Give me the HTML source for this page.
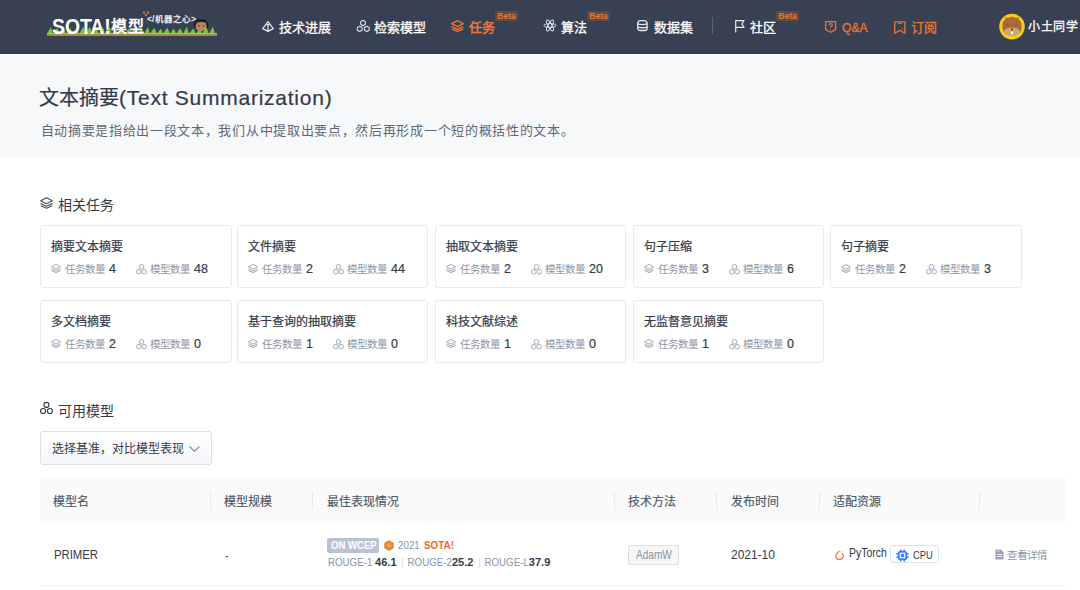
<!DOCTYPE html>
<html lang="zh-CN"><head><meta charset="utf-8">
<style>
*{margin:0;padding:0;box-sizing:border-box}
html,body{width:1080px;height:590px;overflow:hidden;background:#fff;font-family:"Liberation Sans",sans-serif;color:#333}
.a{position:absolute;white-space:nowrap}
svg.a{overflow:visible}
.sx{transform-origin:0 50%}
#hdr{position:absolute;left:0;top:0;width:1080px;height:54px;background:#384153;border-bottom:1px solid #2f3746}
.nav{position:absolute;top:18px;height:20px;line-height:20px;font-size:13px;font-weight:500;-webkit-text-stroke:0.3px currentColor;color:#fff;white-space:nowrap}
.nav.o{color:#ec7631}
.beta{position:absolute;top:11px;width:23px;height:10px;line-height:10px;font-size:8.5px;color:#ec7631;background:#5d4a45;text-align:center;border-radius:1px;font-weight:700}
#hero{position:absolute;left:0;top:55px;width:1080px;height:102px;background:#f7f8fa}
.h1{position:absolute;left:39px;top:84px;line-height:28px;font-size:20px;-webkit-text-stroke:0.2px #333b4a;color:#333b4a;white-space:nowrap}
.sub{position:absolute;left:40.5px;top:120px;font-size:13px;letter-spacing:0.69px;color:#5f6878;white-space:nowrap}
.sec{position:absolute;font-size:14px;margin-top:-0.5px;color:#333b4a;white-space:nowrap}
.card{position:absolute;width:191px;height:63px;border:1px solid #e8eaef;border-radius:3px;background:#fff}
.card .t{position:absolute;left:10px;top:11px;font-size:12px;font-weight:400;-webkit-text-stroke:0.22px currentColor;color:#333b4a;white-space:nowrap}
.card .s{position:absolute;top:35px;font-size:10.5px;color:#8e96a7;white-space:nowrap;height:16px;line-height:16px}
.card .s b{font-weight:400;color:#333b4a;font-size:12.5px;margin-left:4px;-webkit-text-stroke:0.2px currentColor}
.th{position:absolute;top:492px;font-size:12px;color:#4b5565;white-space:nowrap;-webkit-text-stroke:0.15px currentColor}
.dv{position:absolute;top:491px;width:1px;height:19px;background:#e8e9ec}
</style></head><body>
<div id="hdr"></div>
<!-- logo -->
<svg class="a" style="left:0;top:0" width="230" height="54" viewBox="0 0 230 54">
<path d="M47 34.2 Q48.5 31 50.8 27.1 Q52.0 30 53.0 34.2 Q54.5 31 57.3 27.9 Q58.5 30 60.0 34.2 Q61.5 31 63.8 27.4 Q65.0 30 66.0 34.2 Q67.5 31 70.3 28.0 Q71.5 30 73.0 34.2 Q74.5 31 76.8 28.1 Q78.0 30 79.0 34.2 Q80.5 31 83.3 26.7 Q84.5 30 86.0 34.2 Q87.5 31 89.8 26.5 Q91.0 30 92.0 34.2 Q93.5 31 96.3 28.6 Q97.5 30 99.0 34.2 Q100.5 31 102.8 27.1 Q104.0 30 105.0 34.2 Q106.5 31 109.3 27.1 Q110.5 30 112.0 34.2 Q113.5 31 115.8 29.0 Q117.0 30 118.0 34.2 Q119.5 31 122.3 27.7 Q123.5 30 125.0 34.2 Q126.5 31 128.8 28.6 Q130.0 30 131.0 34.2 Q132.5 31 135.3 27.7 Q136.5 30 138.0 34.2 Q139.5 31 141.8 28.1 Q143.0 30 144.0 34.2 Q145.5 31 147.8 26.9 Q149.0 30 150.0 34.2 Q151.5 31 154.3 28.1 Q155.5 30 157.0 34.2 Q158.5 31 160.8 28.7 Q162.0 30 163.0 34.2 Q164.5 31 167.3 27.8 Q168.5 30 170.0 34.2 Q171.5 31 173.8 28.4 Q175.0 30 176.0 34.2 Q177.5 31 180.3 28.2 Q181.5 30 183.0 34.2 Q184.5 31 186.8 26.7 Q188.0 30 189.0 34.2 Q190.5 31 193.3 28.4 Q194.5 30 196.0 34.2 Q197.5 31 199.8 28.0 Q201.0 30 202.0 34.2 Q203.5 31 206.3 27.3 Q207.5 30 209.0 34.2 Q210.5 31 212.8 26.6 Q214.0 30 215.0 34.2 Z" fill="#72c640"/>
<rect x="47" y="33" width="170" height="1.4" fill="#8fd54e"/>
<rect x="47" y="34.3" width="170" height="1.6" fill="#d0873a"/>
<g fill="#e8762c"><rect x="143" y="11.5" width="2" height="2"/><rect x="147" y="11.5" width="2" height="2"/><rect x="145" y="13.8" width="2" height="2"/></g>
<g transform="translate(193.5 19)"><path d="M0.5 6Q0 1.5 4 0.5L5 0L6 0.8L8.5 0L10 0.8L12.5 0.2L12 1.5Q15 3 14.8 6.5L14.5 9L0.8 9Z" fill="#1d1d22"/><ellipse cx="7.6" cy="7.6" rx="5.6" ry="4.6" fill="#b88662"/><rect x="3" y="3.6" width="9.5" height="1.4" fill="#8a8f99"/><rect x="4.5" y="6.2" width="1.6" height="1.3" fill="#7a2238"/><rect x="9.2" y="6.2" width="1.6" height="1.3" fill="#7a2238"/></g>
</svg>
<div class="a" style="left:52px;top:13px;font-size:22px;font-weight:700;color:#fff;line-height:28px"><span style="display:inline-block;transform:scaleX(0.88);transform-origin:0 50%">SOTA!</span></div>
<div class="a" style="left:111px;top:16.5px;font-size:16px;font-weight:700;color:#fff;line-height:20px;letter-spacing:1px">模型</div>
<div class="a" style="left:147px;top:13px;font-size:8.5px;font-weight:700;color:#f0f0f0;line-height:12px;letter-spacing:0.1px">&lt;/机器之心&gt;</div>




<!-- nav -->
<svg class="a" style="left:262px;top:21px" width="12" height="11" viewBox="0 0 12 11"><path d="M6 0.7L0.7 7.6L6 10.4L11.3 7.6Z M6 3.5V10.2 M4.6 3.6H7.4" fill="none" stroke="#e8e9ec" stroke-width="1.2" stroke-linejoin="round"/></svg>
<div class="nav" style="left:279px">技术进展</div>
<svg class="a" style="left:356px;top:19px" width="15" height="14" viewBox="0 0 15 14"><path d="M7.00 6.70 L4.66 5.35 L4.66 2.65 L7.00 1.30 L9.34 2.65 L9.34 5.35ZM3.70 12.55 L1.36 11.20 L1.36 8.50 L3.70 7.15 L6.04 8.50 L6.04 11.20ZM10.85 12.55 L8.51 11.20 L8.51 8.50 L10.85 7.15 L13.19 8.50 L13.19 11.20Z" fill="none" stroke="#dcdfe5" stroke-width="1.15" stroke-linejoin="round"/></svg>
<div class="nav" style="left:374px">检索模型</div>
<svg class="a" style="left:451px;top:20px" width="13" height="12" viewBox="0 0 13 12"><g fill="none" stroke="#ec7631" stroke-width="1.3" stroke-linejoin="round"><path d="M6.5 0.7L12.3 3.7L6.5 6.7L0.7 3.7Z"/><path d="M0.7 6.6L6.5 9.3L12.3 6.6"/><path d="M0.7 8.8L6.5 11.3L12.3 8.8"/></g></svg>
<div class="nav o" style="left:469px;-webkit-text-stroke:0.55px #ec7631">任务</div>
<div class="beta" style="left:495px">Beta</div>
<svg class="a" style="left:543px;top:19px" width="14" height="13" viewBox="0 0 14 13"><g fill="none" stroke="#dcdfe5" stroke-width="1"><ellipse cx="7" cy="6.5" rx="6.1" ry="1.9"/><ellipse cx="7" cy="6.5" rx="6.1" ry="1.9" transform="rotate(60 7 6.5)"/><ellipse cx="7" cy="6.5" rx="6.1" ry="1.9" transform="rotate(120 7 6.5)"/></g></svg>
<div class="nav" style="left:561px">算法</div>
<div class="beta" style="left:587px">Beta</div>
<svg class="a" style="left:637px;top:20px" width="11" height="11" viewBox="0 0 11 11"><g fill="none" stroke="#e8e9ec" stroke-width="1.3"><rect x="0.7" y="0.7" width="9.4" height="9.8" rx="2.6"/><path d="M0.8 3.9Q5.4 5.2 10 3.9 M0.8 7.1Q5.4 8.4 10 7.1"/></g></svg>
<div class="nav" style="left:654px">数据集</div>
<div class="a" style="left:712px;top:17px;width:1px;height:17px;background:#5b6372"></div>
<svg class="a" style="left:735px;top:20px" width="10" height="13" viewBox="0 0 10 13"><path d="M0.7 12.6V0.7H9L6.8 4L9 7.3H0.7" fill="none" stroke="#e8e9ec" stroke-width="1.2" stroke-linejoin="round"/></svg>
<div class="nav" style="left:750px">社区</div>
<div class="beta" style="left:776px">Beta</div>
<svg class="a" style="left:825px;top:21px" width="12" height="12" viewBox="0 0 12 12"><path d="M0.7 0.7H10.6V8.6L5.65 11.3L0.7 8.6Z" fill="none" stroke="#ec7631" stroke-width="1.3" stroke-linejoin="round"/><path d="M4 4.2Q4.2 2.6 5.8 2.6Q7.5 2.7 7.4 4.1Q7.3 5.1 5.8 5.6V6.6" fill="none" stroke="#ec7631" stroke-width="1.1"/><circle cx="5.8" cy="8" r="0.6" fill="#ec7631"/></svg>
<div class="nav o" style="left:842px"><span style="display:inline-block;transform:scaleX(0.93);transform-origin:0 50%">Q&amp;A</span></div>
<svg class="a" style="left:894px;top:21px" width="12" height="13" viewBox="0 0 12 13"><path d="M0.7 0.9H10.9V12.2L5.8 9.4L0.7 12.2Z" fill="none" stroke="#ec7631" stroke-width="1.3" stroke-linejoin="round"/><path d="M4.2 2.4H7.4" stroke="#ec7631" stroke-width="1.2"/><path d="M8.3 6.3L9 7.4L8.3 8.5L7.6 7.4Z" fill="#ec7631"/></svg>
<div class="nav o" style="left:911px">订阅</div>
<svg class="a" style="left:999px;top:13px" width="26" height="27" viewBox="0 0 26 27"><circle cx="13" cy="13.6" r="12.8" fill="#f4cf12"/><path d="M3.4 15Q3 8 7 5.8L5.6 3.9L9.2 4.9Q13 2.6 16.8 4.9L20.4 3.9L19 5.8Q23 8 22.6 15Q22 22.4 13 22.6Q4 22.4 3.4 15Z" fill="#a86b3e"/><ellipse cx="13" cy="18.8" rx="8.3" ry="4" fill="#d6a574"/><path d="M7.3 12.6Q8.6 11.2 9.9 12.6M16.1 12.6Q17.4 11.2 18.7 12.6" fill="none" stroke="#7d4a26" stroke-width="0.7"/><ellipse cx="13" cy="16.6" rx="0.9" ry="1.1" fill="#5a1d12"/><rect x="12" y="18.6" width="2" height="2.6" rx="0.4" fill="#fff"/></svg>
<div class="a" style="left:1028px;top:18px;font-size:12px;letter-spacing:0.5px;font-weight:400;-webkit-text-stroke:0.3px #fff;color:#fff;line-height:18px">小土同学</div>

<div id="hero"></div>
<div class="h1">文本摘要<span style="font-size:21px;letter-spacing:0.75px">(Text Summarization)</span></div>
<div class="sub">自动摘要是指给出一段文本，我们从中提取出要点，然后再形成一个短的概括性的文本。</div>

<svg class="a" style="left:40px;top:197px" width="13" height="12" viewBox="0 0 13 12"><g fill="none" stroke="#4a5363" stroke-width="1.2" stroke-linejoin="round"><path d="M6.5 0.7L12.3 3.7L6.5 6.7L0.7 3.7Z"/><path d="M0.7 6.6L6.5 9.3L12.3 6.6"/><path d="M0.7 8.8L6.5 11.3L12.3 8.8"/></g></svg>
<div class="sec" style="left:58px;top:194px">相关任务</div>

<div class="card" style="width:192px;left:40px;top:225px"><div class="t">摘要文本摘要</div><svg class="a" style="left:10px;top:38px" width="10" height="9" viewBox="0 0 10 9"><g fill="none" stroke="#a3abbb" stroke-width="1" stroke-linejoin="round"><path d="M5 0.5L9.5 2.8L5 5.1L0.5 2.8Z"/><path d="M0.5 4.9L5 7L9.5 4.9"/><path d="M0.5 6.6L5 8.6L9.5 6.6"/></g></svg><div class="s" style="left:24px">任务数量<b>4</b></div><svg class="a" style="left:95px;top:38px" width="11" height="11" viewBox="0 0 11 11"><g fill="none" stroke="#a3abbb" stroke-width="1"><circle cx="5.5" cy="2.8" r="2.3"/><circle cx="2.8" cy="7.7" r="2.3"/><circle cx="8.2" cy="7.7" r="2.3"/></g></svg><div class="s" style="left:109px">模型数量<b>48</b></div></div>
<div class="card" style="left:237px;top:225px"><div class="t">文件摘要</div><svg class="a" style="left:10px;top:38px" width="10" height="9" viewBox="0 0 10 9"><g fill="none" stroke="#a3abbb" stroke-width="1" stroke-linejoin="round"><path d="M5 0.5L9.5 2.8L5 5.1L0.5 2.8Z"/><path d="M0.5 4.9L5 7L9.5 4.9"/><path d="M0.5 6.6L5 8.6L9.5 6.6"/></g></svg><div class="s" style="left:24px">任务数量<b>2</b></div><svg class="a" style="left:95px;top:38px" width="11" height="11" viewBox="0 0 11 11"><g fill="none" stroke="#a3abbb" stroke-width="1"><circle cx="5.5" cy="2.8" r="2.3"/><circle cx="2.8" cy="7.7" r="2.3"/><circle cx="8.2" cy="7.7" r="2.3"/></g></svg><div class="s" style="left:109px">模型数量<b>44</b></div></div>
<div class="card" style="left:435px;top:225px"><div class="t">抽取文本摘要</div><svg class="a" style="left:10px;top:38px" width="10" height="9" viewBox="0 0 10 9"><g fill="none" stroke="#a3abbb" stroke-width="1" stroke-linejoin="round"><path d="M5 0.5L9.5 2.8L5 5.1L0.5 2.8Z"/><path d="M0.5 4.9L5 7L9.5 4.9"/><path d="M0.5 6.6L5 8.6L9.5 6.6"/></g></svg><div class="s" style="left:24px">任务数量<b>2</b></div><svg class="a" style="left:95px;top:38px" width="11" height="11" viewBox="0 0 11 11"><g fill="none" stroke="#a3abbb" stroke-width="1"><circle cx="5.5" cy="2.8" r="2.3"/><circle cx="2.8" cy="7.7" r="2.3"/><circle cx="8.2" cy="7.7" r="2.3"/></g></svg><div class="s" style="left:109px">模型数量<b>20</b></div></div>
<div class="card" style="left:633px;top:225px"><div class="t">句子压缩</div><svg class="a" style="left:10px;top:38px" width="10" height="9" viewBox="0 0 10 9"><g fill="none" stroke="#a3abbb" stroke-width="1" stroke-linejoin="round"><path d="M5 0.5L9.5 2.8L5 5.1L0.5 2.8Z"/><path d="M0.5 4.9L5 7L9.5 4.9"/><path d="M0.5 6.6L5 8.6L9.5 6.6"/></g></svg><div class="s" style="left:24px">任务数量<b>3</b></div><svg class="a" style="left:95px;top:38px" width="11" height="11" viewBox="0 0 11 11"><g fill="none" stroke="#a3abbb" stroke-width="1"><circle cx="5.5" cy="2.8" r="2.3"/><circle cx="2.8" cy="7.7" r="2.3"/><circle cx="8.2" cy="7.7" r="2.3"/></g></svg><div class="s" style="left:109px">模型数量<b>6</b></div></div>
<div class="card" style="width:192px;left:830px;top:225px"><div class="t">句子摘要</div><svg class="a" style="left:10px;top:38px" width="10" height="9" viewBox="0 0 10 9"><g fill="none" stroke="#a3abbb" stroke-width="1" stroke-linejoin="round"><path d="M5 0.5L9.5 2.8L5 5.1L0.5 2.8Z"/><path d="M0.5 4.9L5 7L9.5 4.9"/><path d="M0.5 6.6L5 8.6L9.5 6.6"/></g></svg><div class="s" style="left:24px">任务数量<b>2</b></div><svg class="a" style="left:95px;top:38px" width="11" height="11" viewBox="0 0 11 11"><g fill="none" stroke="#a3abbb" stroke-width="1"><circle cx="5.5" cy="2.8" r="2.3"/><circle cx="2.8" cy="7.7" r="2.3"/><circle cx="8.2" cy="7.7" r="2.3"/></g></svg><div class="s" style="left:109px">模型数量<b>3</b></div></div>
<div class="card" style="width:192px;left:40px;top:300px"><div class="t">多文档摘要</div><svg class="a" style="left:10px;top:38px" width="10" height="9" viewBox="0 0 10 9"><g fill="none" stroke="#a3abbb" stroke-width="1" stroke-linejoin="round"><path d="M5 0.5L9.5 2.8L5 5.1L0.5 2.8Z"/><path d="M0.5 4.9L5 7L9.5 4.9"/><path d="M0.5 6.6L5 8.6L9.5 6.6"/></g></svg><div class="s" style="left:24px">任务数量<b>2</b></div><svg class="a" style="left:95px;top:38px" width="11" height="11" viewBox="0 0 11 11"><g fill="none" stroke="#a3abbb" stroke-width="1"><circle cx="5.5" cy="2.8" r="2.3"/><circle cx="2.8" cy="7.7" r="2.3"/><circle cx="8.2" cy="7.7" r="2.3"/></g></svg><div class="s" style="left:109px">模型数量<b>0</b></div></div>
<div class="card" style="left:237px;top:300px"><div class="t">基于查询的抽取摘要</div><svg class="a" style="left:10px;top:38px" width="10" height="9" viewBox="0 0 10 9"><g fill="none" stroke="#a3abbb" stroke-width="1" stroke-linejoin="round"><path d="M5 0.5L9.5 2.8L5 5.1L0.5 2.8Z"/><path d="M0.5 4.9L5 7L9.5 4.9"/><path d="M0.5 6.6L5 8.6L9.5 6.6"/></g></svg><div class="s" style="left:24px">任务数量<b>1</b></div><svg class="a" style="left:95px;top:38px" width="11" height="11" viewBox="0 0 11 11"><g fill="none" stroke="#a3abbb" stroke-width="1"><circle cx="5.5" cy="2.8" r="2.3"/><circle cx="2.8" cy="7.7" r="2.3"/><circle cx="8.2" cy="7.7" r="2.3"/></g></svg><div class="s" style="left:109px">模型数量<b>0</b></div></div>
<div class="card" style="left:435px;top:300px"><div class="t">科技文献综述</div><svg class="a" style="left:10px;top:38px" width="10" height="9" viewBox="0 0 10 9"><g fill="none" stroke="#a3abbb" stroke-width="1" stroke-linejoin="round"><path d="M5 0.5L9.5 2.8L5 5.1L0.5 2.8Z"/><path d="M0.5 4.9L5 7L9.5 4.9"/><path d="M0.5 6.6L5 8.6L9.5 6.6"/></g></svg><div class="s" style="left:24px">任务数量<b>1</b></div><svg class="a" style="left:95px;top:38px" width="11" height="11" viewBox="0 0 11 11"><g fill="none" stroke="#a3abbb" stroke-width="1"><circle cx="5.5" cy="2.8" r="2.3"/><circle cx="2.8" cy="7.7" r="2.3"/><circle cx="8.2" cy="7.7" r="2.3"/></g></svg><div class="s" style="left:109px">模型数量<b>0</b></div></div>
<div class="card" style="left:633px;top:300px"><div class="t">无监督意见摘要</div><svg class="a" style="left:10px;top:38px" width="10" height="9" viewBox="0 0 10 9"><g fill="none" stroke="#a3abbb" stroke-width="1" stroke-linejoin="round"><path d="M5 0.5L9.5 2.8L5 5.1L0.5 2.8Z"/><path d="M0.5 4.9L5 7L9.5 4.9"/><path d="M0.5 6.6L5 8.6L9.5 6.6"/></g></svg><div class="s" style="left:24px">任务数量<b>1</b></div><svg class="a" style="left:95px;top:38px" width="11" height="11" viewBox="0 0 11 11"><g fill="none" stroke="#a3abbb" stroke-width="1"><circle cx="5.5" cy="2.8" r="2.3"/><circle cx="2.8" cy="7.7" r="2.3"/><circle cx="8.2" cy="7.7" r="2.3"/></g></svg><div class="s" style="left:109px">模型数量<b>0</b></div></div>

<svg class="a" style="left:40px;top:402px" width="13" height="12" viewBox="0 0 13 12"><g fill="none" stroke="#333b4a" stroke-width="1.15"><circle cx="6.5" cy="2.9" r="2.5"/><circle cx="3.1" cy="9" r="2.5"/><circle cx="9.9" cy="9" r="2.5"/></g></svg>
<div class="sec" style="left:58px;top:400px">可用模型</div>

<div class="a" style="left:40px;top:431px;width:172px;height:34px;border:1px solid #dcdfe6;border-radius:3px;background:linear-gradient(#fff,#f4f5f8)"></div>
<div class="a" style="left:52px;top:439px;font-size:12px;color:#333b4a">选择基准，对比模型表现</div>
<svg class="a" style="left:189px;top:446px" width="11" height="6" viewBox="0 0 11 6"><path d="M0.6 0.6L5.5 5.2L10.4 0.6" fill="none" stroke="#7a8294" stroke-width="1.15"/></svg>

<div class="a" style="left:40px;top:478px;width:1026px;height:46px;background:#fafafa"></div>
<div class="a" style="left:40px;top:585px;width:1026px;height:1px;background:#eef0f3"></div>
<div class="th" style="left:53px">模型名</div>
<div class="dv" style="left:210px"></div>
<div class="th" style="left:224px">模型规模</div>
<div class="dv" style="left:312px"></div>
<div class="th" style="left:327px">最佳表现情况</div>
<div class="dv" style="left:614px"></div>
<div class="th" style="left:628px">技术方法</div>
<div class="dv" style="left:716px"></div>
<div class="th" style="left:731px">发布时间</div>
<div class="dv" style="left:819px"></div>
<div class="th" style="left:833px">适配资源</div>
<div class="dv" style="left:979px"></div>


<div class="a sx" style="left:53.5px;top:547px;font-size:13px;color:#333b4a;line-height:16px;transform:scaleX(0.87)">PRIMER</div>
<div class="a" style="left:224.5px;top:548.5px;font-size:12.5px;color:#5f6878">-</div>
<div class="a" style="left:327px;top:538px;width:52px;height:15px;background:#b8c3d4;border-radius:2px"></div>
<div class="a sx" style="left:331px;top:539px;font-size:10.3px;font-weight:700;color:#fff;line-height:13px;transform:scaleX(0.93)">ON WCEP</div>
<svg class="a" style="left:384px;top:540px" width="10" height="11" viewBox="0 0 10 11"><path d="M5 0.6L9.2 3V8L5 10.4L0.8 8V3Z" fill="#e8883a" stroke="#e8883a" stroke-width="1" stroke-linejoin="round"/><circle cx="5" cy="5.5" r="2" fill="#f0a860"/></svg>
<div class="a sx" style="left:398px;top:539px;font-size:10.3px;color:#8b93a4;line-height:13px;transform:scaleX(0.95)">2021</div>
<div class="a sx" style="left:424px;top:538.5px;font-size:11px;font-weight:700;color:#ec6a2c;line-height:13px;transform:scaleX(0.9)">SOTA!</div>
<div class="a sx" style="left:327.5px;top:555px;font-size:10.3px;color:#8b93a4;line-height:13px;transform:scaleX(0.945)">ROUGE-1 <b style="color:#333b4a;font-size:11.7px">46.1</b><span style="color:#d5d9e0;margin:0 4px 0 5px">|</span>ROUGE-2<b style="color:#333b4a;font-size:11.7px">25.2</b><span style="color:#d5d9e0;margin:0 4px 0 5px">|</span>ROUGE-L<b style="color:#333b4a;font-size:11.7px">37.9</b></div>
<div class="a" style="left:628px;top:545px;width:51px;height:20px;border:1px solid #dcdfe6;border-radius:2px;background:#f5f6f8"></div>
<div class="a sx" style="left:635.5px;top:547.5px;font-size:12px;color:#8b93a4;line-height:14px;transform:scaleX(0.84)">AdamW</div>
<div class="a sx" style="left:731px;top:547px;font-size:13px;color:#333b4a;line-height:16px;transform:scaleX(0.92)">2021-10</div>
<svg class="a" style="left:835px;top:550px" width="9" height="10" viewBox="0 0 9 10"><path d="M4.5 0.8L2 3.3Q0.8 4.6 0.8 6Q0.8 9.3 4.5 9.3Q8.2 9.3 8.2 6Q8.2 4.3 6.8 3.1" fill="none" stroke="#ee6b4d" stroke-width="1.2"/><circle cx="6.3" cy="1.9" r="0.6" fill="#ee6b4d"/></svg>
<div class="a sx" style="left:849px;top:546px;font-size:12px;color:#333b4a;line-height:14px;transform:scaleX(0.87)">PyTorch</div>
<div class="a" style="left:890px;top:545px;width:49px;height:18px;border:1px solid #dde1ea;border-radius:3px;background:#fff"></div>
<svg class="a" style="left:896px;top:549px" width="13" height="13" viewBox="0 0 13 13"><g fill="#3d7ff0"><rect x="2" y="2" width="9" height="9" rx="1.5"/><rect x="4" y="0.4" width="1.7" height="12.2" rx="0.5"/><rect x="7.3" y="0.4" width="1.7" height="12.2" rx="0.5"/><rect x="0.4" y="4" width="12.2" height="1.7" rx="0.5"/><rect x="0.4" y="7.3" width="12.2" height="1.7" rx="0.5"/></g><rect x="3.7" y="3.7" width="5.6" height="5.6" fill="#fff"/><rect x="4.9" y="4.9" width="3.2" height="3.2" fill="#3d7ff0"/></svg>
<div class="a sx" style="left:912.5px;top:547.5px;font-size:11px;color:#333b4a;line-height:14px;transform:scaleX(0.85)">CPU</div>
<svg class="a" style="left:995px;top:549px" width="9" height="11" viewBox="0 0 9 11"><path d="M0.5 1Q0.5 0.5 1 0.5H5.8L8.5 3.2V10Q8.5 10.5 8 10.5H1Q0.5 10.5 0.5 10Z" fill="#9aa2b3"/><path d="M2 5.5H7M2 7.5H7" stroke="#fff" stroke-width="0.8"/><path d="M2.5 2H4.5" stroke="#fff" stroke-width="0.8"/></svg>
<div class="a" style="left:1007px;top:547px;font-size:10.5px;color:#8b93a4">查看详情</div>
</body></html>
